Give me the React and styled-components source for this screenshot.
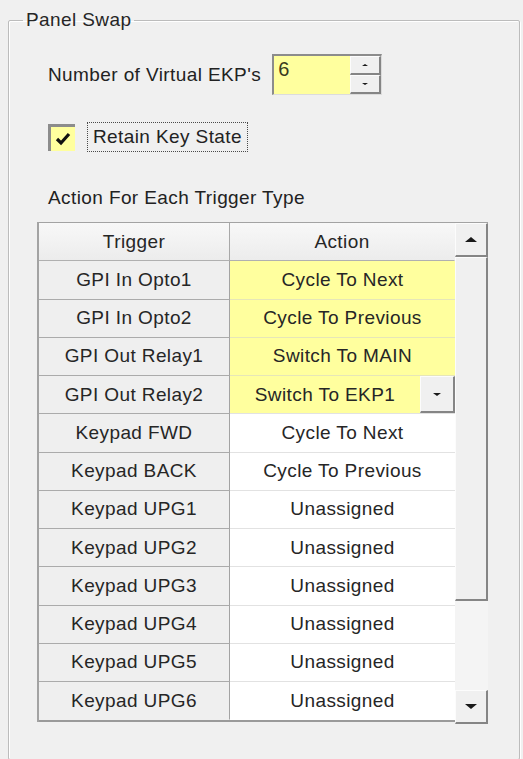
import React from 'react';
import styled, { createGlobalStyle } from 'styled-components';

const GlobalStyle = createGlobalStyle`
  html, body {
    margin: 0;
    padding: 0;
    background: #f0f0f0;
  }
  body {
    font-family: "Liberation Sans", Arial, sans-serif;
    color: #222;
  }
`;

const YELLOW = '#ffff9e';

const Page = styled.div`
  width: 523px;
  height: 759px;
  box-sizing: border-box;
  padding: 9px 3px 0 8px;
`;

const GroupBox = styled.fieldset`
  margin: 0;
  min-width: 0;
  padding: 0 0 37px 0;
  border: 1px solid #bcbcbc;
  border-radius: 2px;
  box-shadow: inset 1px 1px 0 #fff, 1px 1px 0 #fff;
`;

const Legend = styled.legend`
  margin-left: 14px;
  padding: 0 3px;
  font-size: 19px;
  line-height: 22px;
  letter-spacing: 0.4px;
  color: #262626;
`;

const Body = styled.div`
  padding-left: 28px;
`;

const Text = styled.span`
  font-size: 19px;
  letter-spacing: 0.4px;
  line-height: 24px;
  white-space: nowrap;
`;

const FieldRow = styled.div`
  display: flex;
  align-items: center;
  gap: 11px;
  margin: 23px 0 0 11px;
`;

const Spin = styled.div`
  display: flex;
  width: 110px;
  height: 41px;
  box-sizing: border-box;
  border-top: 2px solid #8c8c8c;
  border-left: 2px solid #8c8c8c;
  border-right: 1px solid #dcdcdc;
  border-bottom: 1px solid #dcdcdc;
`;

const SpinValue = styled.div`
  flex: 1;
  background: ${YELLOW};
  padding: 2px 0 0 4px;
  font-size: 20px;
  line-height: 22px;
  color: #3a3a20;
`;

const SpinButtons = styled.div`
  width: 31px;
  display: flex;
  flex-direction: column;
`;

const RaisedButton = styled.div`
  display: flex;
  align-items: center;
  justify-content: center;
  box-sizing: border-box;
  background: #f0f0f0;
  border-top: 1px solid #fcfcfc;
  border-left: 1px solid #fcfcfc;
  border-right: 2px solid #858585;
  border-bottom: 2px solid #858585;
  flex: ${(p) => (p.$grow ? 1 : 'none')};
  height: ${(p) => (p.$h ? `${p.$h}px` : 'auto')};
`;

const Arrow = styled.span`
  width: 0;
  height: 0;
  border-left: ${(p) => p.$size}px solid transparent;
  border-right: ${(p) => p.$size}px solid transparent;
  ${(p) =>
    p.$up
      ? `border-bottom: ${Math.round(p.$size * 0.8)}px solid #1a1a1a;`
      : `border-top: ${Math.round(p.$size * 0.8)}px solid #1a1a1a;`}
`;

const CheckRow = styled.label`
  display: flex;
  align-items: center;
  gap: 12px;
  margin: 27px 0 0 11px;
`;

const CheckBox = styled.span`
  width: 27px;
  height: 27px;
  box-sizing: border-box;
  background: ${YELLOW};
  border-top: 3px solid #8c8c8c;
  border-left: 3px solid #8c8c8c;
  display: flex;
  align-items: center;
  justify-content: center;
`;

const FocusLabel = styled(Text)`
  box-sizing: border-box;
  height: 30px;
  width: 161px;
  padding: 2px 0 0 5px;
  border: 1px dotted #4a4a4a;
`;

const SectionTitle = styled(Text)`
  display: block;
  margin: 34px 0 0 11px;
`;

const GridFrame = styled.div`
  display: flex;
  width: 451px;
  margin-top: 12px;
  box-sizing: border-box;
  border-top: 1px solid #a3a3a3;
  border-left: 2px solid #a3a3a3;
`;

const Table = styled.div`
  width: 416px;
  display: flex;
  flex-direction: column;
  border-bottom: 2px solid #9a9a9a;
`;

const Row = styled.div`
  display: grid;
  grid-template-columns: 191px 225px;
  height: 38.25px;
`;

const Cell = styled.div`
  display: flex;
  align-items: center;
  justify-content: center;
  box-sizing: border-box;
  font-size: 19px;
  letter-spacing: 0.4px;
  white-space: nowrap;
  color: #262626;
`;

const HeaderCell = styled(Cell)`
  background: linear-gradient(#f8f8f8, #ececec);
  border-right: 1px solid ${(p) => (p.$last ? 'transparent' : '#a8a8a8')};
  border-bottom: 1px solid #b0b0b0;
`;

const TriggerCell = styled(Cell)`
  background: #efefef;
  border-right: 1px solid #a3a3a3;
  border-bottom: 1px solid ${(p) => (p.$last ? 'transparent' : '#ababab')};
`;

const ActionCell = styled(Cell)`
  background: ${(p) => (p.$yellow ? YELLOW : '#ffffff')};
  border-bottom: 1px solid ${(p) => (p.$last ? 'transparent' : p.$yellow ? '#e6e6b8' : '#e2e2e2')};
`;

const ComboCell = styled.div`
  display: flex;
  box-sizing: border-box;
  border-bottom: 1px solid #e2e2e2;
`;

const ComboValue = styled(Cell)`
  flex: 1;
  background: ${YELLOW};
`;

const ComboButton = styled(RaisedButton)`
  width: 35px;
`;

const ScrollBar = styled.div`
  width: 33px;
  display: flex;
  flex-direction: column;
  background: #f4f4f4;
  margin-bottom: -2px;
`;

const Track = styled.div`
  flex: 1;
`;

const rows = [
  ['GPI In Opto1', 'Cycle To Next', 'yellow'],
  ['GPI In Opto2', 'Cycle To Previous', 'yellow'],
  ['GPI Out Relay1', 'Switch To MAIN', 'yellow'],
  ['GPI Out Relay2', 'Switch To EKP1', 'combo'],
  ['Keypad FWD', 'Cycle To Next'],
  ['Keypad BACK', 'Cycle To Previous'],
  ['Keypad UPG1', 'Unassigned'],
  ['Keypad UPG2', 'Unassigned'],
  ['Keypad UPG3', 'Unassigned'],
  ['Keypad UPG4', 'Unassigned'],
  ['Keypad UPG5', 'Unassigned'],
  ['Keypad UPG6', 'Unassigned'],
];

const CheckMark = () => (
  <svg width="16" height="14" viewBox="0 0 16 14">
    <polyline points="2,7 6,11 14,2" fill="none" stroke="#111" strokeWidth="3.2" />
  </svg>
);

const App = () => {
  return (
    <Page>
      <GlobalStyle />
      <GroupBox>
        <Legend>Panel Swap</Legend>
        <Body>
          <FieldRow>
            <Text>Number of Virtual EKP's</Text>
            <Spin>
              <SpinValue>6</SpinValue>
              <SpinButtons>
                <RaisedButton $grow>
                  <Arrow $up $size={3} />
                </RaisedButton>
                <RaisedButton $grow>
                  <Arrow $size={3} />
                </RaisedButton>
              </SpinButtons>
            </Spin>
          </FieldRow>

          <CheckRow>
            <CheckBox>
              <CheckMark />
            </CheckBox>
            <FocusLabel>Retain Key State</FocusLabel>
          </CheckRow>

          <SectionTitle>Action For Each Trigger Type</SectionTitle>

          <GridFrame>
            <Table>
              <Row>
                <HeaderCell>Trigger</HeaderCell>
                <HeaderCell $last>Action</HeaderCell>
              </Row>
              {rows.map(([trigger, action, kind], i) => {
                const last = i === rows.length - 1;
                return (
                  <Row key={trigger}>
                    <TriggerCell $last={last}>{trigger}</TriggerCell>
                    {kind === 'combo' ? (
                      <ComboCell>
                        <ComboValue>{action}</ComboValue>
                        <ComboButton>
                          <Arrow $size={4} />
                        </ComboButton>
                      </ComboCell>
                    ) : (
                      <ActionCell $yellow={kind === 'yellow'} $last={last}>
                        {action}
                      </ActionCell>
                    )}
                  </Row>
                );
              })}
            </Table>
            <ScrollBar>
              <RaisedButton $h={34}>
                <Arrow $up $size={6} />
              </RaisedButton>
              <RaisedButton $h={344} />
              <Track />
              <RaisedButton $h={34}>
                <Arrow $size={6} />
              </RaisedButton>
            </ScrollBar>
          </GridFrame>
        </Body>
      </GroupBox>
    </Page>
  );
};

export default App;
